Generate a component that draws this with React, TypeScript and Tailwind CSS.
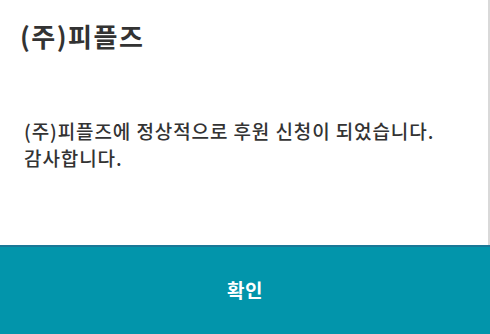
export default function App() {
  return (
    <div
      className="w-[490px] h-[334px] flex flex-col bg-white overflow-hidden"
      style={{ fontFamily: '"Noto Sans CJK KR", "Noto Sans", sans-serif' }}
    >
      <div className="flex-1 flex flex-col border-r-2 border-[#d9d9d9]">
        <h1 className="pl-[20px] pt-[20px] text-[26px] leading-[32px] font-bold text-[#333333] tracking-[1.5px]">
          (주)피플즈
        </h1>
        <p className="pl-[24px] pt-[65px] text-[19px] leading-[27px] font-medium text-[#333333] tracking-[0.9px]">
          (주)피플즈에 정상적으로 후원 신청이 되었습니다.
          <br />
          감사합니다.
        </p>
      </div>
      <button className="h-[89px] w-full shrink-0 bg-[#0295ab] border-t-2 border-[#1a7897] text-white text-[19px] font-bold tracking-[0.5px]">
        확인
      </button>
    </div>
  );
}
